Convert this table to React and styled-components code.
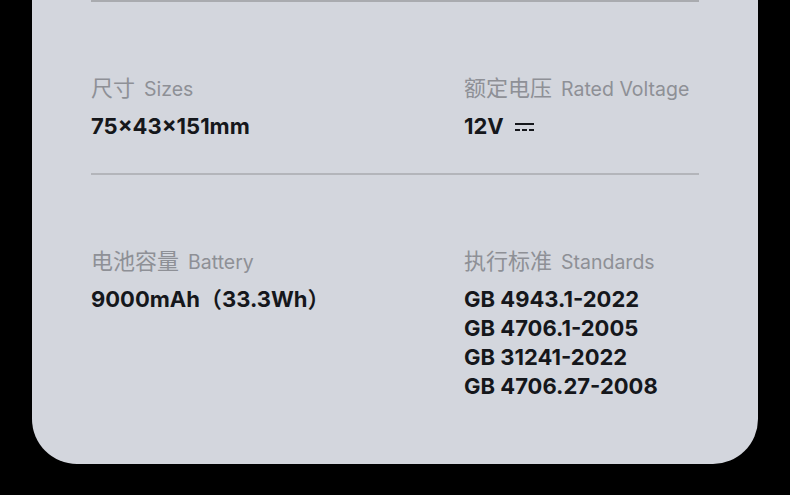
import React from "react";
import styled, { createGlobalStyle } from "styled-components";

const Global = createGlobalStyle`
  html, body {
    margin: 0;
    padding: 0;
    background: #000;
  }
  body {
    font-family: "Inter", "Noto Sans CJK SC", sans-serif;
  }
`;

const Page = styled.div`
  width: 790px;
  height: 495px;
  background: #000;
  overflow: hidden;
`;

const Card = styled.div`
  margin: 0 32px;
  height: 464px;
  background: #d3d6dd;
  border-radius: 0 0 45px 45px;
  padding: 0 59px;
  box-sizing: border-box;
`;

const Divider = styled.div`
  height: ${(p) => p.thick}px;
  background: ${(p) => p.color};
`;

const Section = styled.div`
  display: grid;
  grid-template-columns: 373px 1fr;
  padding: ${(p) => p.pad};
`;

const Item = styled.div`
  display: flex;
  flex-direction: column;
`;

const Label = styled.div`
  display: flex;
  align-items: baseline;
  gap: 9px;
  color: #8e9096;
  height: 30px;
  margin-bottom: 12px;
`;

const Cn = styled.span`
  font-family: "Noto Sans CJK SC", sans-serif;
  font-size: 22px;
`;

const En = styled.span`
  font-size: 19.5px;
`;

const Value = styled.div`
  display: flex;
  align-items: center;
  gap: 11px;
  color: #15171b;
  font-weight: 700;
  font-size: 22px;
  line-height: 29px;
`;

const Dc = () => (
  <svg width="19" height="10" viewBox="0 0 19 10">
    <rect x="0" y="1" width="19" height="2" fill="#15171b" />
    <rect x="0" y="7" width="5" height="2" fill="#15171b" />
    <rect x="7" y="7" width="5" height="2" fill="#15171b" />
    <rect x="14" y="7" width="5" height="2" fill="#15171b" />
  </svg>
);

const standards = [
  "GB 4943.1-2022",
  "GB 4706.1-2005",
  "GB 31241-2022",
  "GB 4706.27-2008",
];

export default function App() {
  return (
    <Page>
      <Global />
      <Card>
        <Divider thick={2} color="#a9abaf" />
        <Section pad="68px 0 32px">
          <Item>
            <Label>
              <Cn>尺寸</Cn>
              <En>Sizes</En>
            </Label>
            <Value>75×43×151mm</Value>
          </Item>
          <Item>
            <Label>
              <Cn>额定电压</Cn>
              <En>Rated Voltage</En>
            </Label>
            <Value>
              12V <Dc />
            </Value>
          </Item>
        </Section>
        <Divider thick={2} color="#b3b5ba" />
        <Section pad="68px 0 0">
          <Item>
            <Label>
              <Cn>电池容量</Cn>
              <En>Battery</En>
            </Label>
            <Value>9000mAh（33.3Wh）</Value>
          </Item>
          <Item>
            <Label>
              <Cn>执行标准</Cn>
              <En>Standards</En>
            </Label>
            {standards.map((s) => (
              <Value key={s}>{s}</Value>
            ))}
          </Item>
        </Section>
      </Card>
    </Page>
  );
}
